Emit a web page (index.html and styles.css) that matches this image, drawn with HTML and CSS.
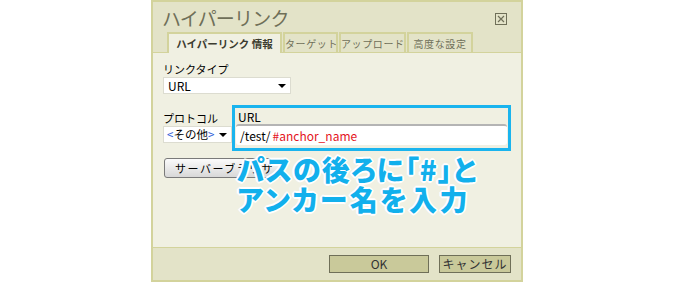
FILE: index.html
```html
<!DOCTYPE html>
<html lang="ja">
<head>
    <meta charset="UTF-8">
    <title>ハイパーリンク</title>
    <link rel="stylesheet" href="styles.css">
</head>
<body>
    <div class="dialog">
        <div class="dialog-head">
            <div class="title-row">
                <span class="title">ハイパーリンク</span>
                <svg class="close" width="12" height="12" viewBox="0 0 12 12">
                    <rect x="0.5" y="0.5" width="11" height="11" fill="none" stroke="#6f6f58"/>
                    <path d="M3 3 L9 9 M9 3 L3 9" stroke="#6f6f58" stroke-width="1.2"/>
                </svg>
            </div>
            <ul class="tabs">
                <li class="tab active">ハイパーリンク 情報</li>
                <li class="tab t-target">ターゲット</li>
                <li class="tab t-upload">アップロード</li>
                <li class="tab t-adv">高度な設定</li>
            </ul>
        </div>
        <div class="dialog-body">
            <div class="field">
                <label class="label">リンクタイプ</label>
                <div class="select select-type">URL<span class="arrow"></span></div>
            </div>
            <div class="url-row">
                <div class="field protocol">
                    <label class="label">プロトコル</label>
                    <div class="select select-proto"><span class="lt">&lt;</span>その他<span class="lt">&gt;</span><span class="arrow"></span></div>
                </div>
                <div class="url-box">
                    <div class="url-label">URL</div>
                    <div class="url-input">/test/<span class="anchor">#anchor_name</span></div>
                </div>
            </div>
            <button class="browse">サーバーブラウザ</button>
            <div class="note">パスの後ろに「#」と<br><span class="line2">アンカー名を入力</span></div>
        </div>
        <div class="dialog-foot">
            <button class="btn btn-ok">OK</button>
            <button class="btn btn-cancel">キャンセル</button>
        </div>
    </div>
</body>
</html>
```

FILE: styles.css
```css
body {
    margin: 0;
    background: #ffffff;
    font-family: "Noto Sans CJK JP", "DejaVu Sans", sans-serif;
    font-size: 11px;
    color: #000;
}

.dialog {
    margin-left: 151px;
    width: 368px;
    height: 278px;
    border: 2px solid #d3d39c;
    display: flex;
    flex-direction: column;
    background: #e3e3c8;
}

.dialog-head {
    height: 50px;
    border-bottom: 1px solid #d3d39c;
    display: flex;
    flex-direction: column;
    justify-content: space-between;
}

.title-row {
    display: flex;
    justify-content: space-between;
    align-items: center;
    padding: 2px 14px 0 9px;
    height: 27px;
}

.title {
    font-size: 19px;
    line-height: 26px;
    color: #6f6f58;
    letter-spacing: -0.8px;
}

.close {
    margin-top: 3px;
}

.tabs {
    list-style: none;
    margin: 0 0 -1px 0;
    padding: 0 0 0 14px;
    display: flex;
    height: 21px;
}

.tab {
    box-sizing: border-box;
    height: 21px;
    border: 2px solid #d3d39c;
    border-bottom: none;
    margin-right: 1px;
    color: #6f6f58;
    font-size: 10px;
    line-height: 19px;
    letter-spacing: 0.6px;
    text-align: center;
    white-space: nowrap;
    overflow: hidden;
}

.tab.active {
    width: 115px;
    background: #f0f0e2;
    color: #3c3c30;
    font-weight: bold;
    font-size: 10.5px;
    letter-spacing: 0;
}

.t-target { width: 55px; }
.t-upload { width: 67px; }
.t-adv { width: 66px; }

.dialog-body {
    position: relative;
    flex: 1;
    background: #f0f0e2;
    padding: 9px 10px 0 10px;
    border-bottom: 1px solid #d3d39c;
}

.label {
    display: block;
    height: 14px;
    line-height: 14px;
    font-size: 11px;
}

.select {
    position: relative;
    box-sizing: border-box;
    height: 17px;
    background: #fff;
    border: 1px solid #dcdcd0;
    font-size: 12px;
    line-height: 15px;
    padding-left: 4px;
    margin-top: 1px;
    white-space: nowrap;
}

.select-type {
    width: 128px;
}

.select-proto {
    width: 69px;
    padding-left: 3px;
    font-size: 11.5px;
}

.lt {
    color: #2a5bd7;
}

.arrow {
    position: absolute;
    right: 4px;
    top: 6px;
    border-left: 4px solid transparent;
    border-right: 4px solid transparent;
    border-top: 4px solid #000;
}

.url-row {
    display: flex;
    align-items: flex-start;
    margin-top: 11px;
}

.protocol {
    padding-top: 6px;
    width: 70px;
}

.url-box {
    width: 276px;
    height: 39px;
    border: 3px solid #1ab4ee;
    padding: 1px 1px 0 1px;
    box-sizing: content-box;
}

.url-label {
    height: 15px;
    line-height: 15px;
    font-size: 12px;
    padding-left: 2px;
}

.url-input {
    height: 19px;
    background: #fff;
    border-top: 2px solid #b4b4b4;
    border-radius: 3px;
    font-size: 12px;
    line-height: 19px;
    padding-left: 4px;
}

.anchor {
    color: #e4141e;
    margin-left: 2px;
}

.browse {
    display: block;
    margin: 7px 0 0 1px;
    height: 20px;
    padding: 0 10px;
    white-space: nowrap;
    font-family: "Noto Sans CJK JP", sans-serif;
    font-size: 11px;
    letter-spacing: 1.5px;
    border: 1px solid #7a7a7a;
    border-radius: 3px;
    background: linear-gradient(#fbfbfb, #d8d8d8);
}

.note {
    position: absolute;
    left: 84px;
    top: 101px;
    font-family: "Noto Sans CJK JP", sans-serif;
    font-weight: 900;
    font-size: 28px;
    line-height: 30px;
    letter-spacing: 1px;
    font-feature-settings: "palt";
    color: #12b0ec;
    text-shadow: 2px 0 0 #fff, -2px 0 0 #fff, 0 2px 0 #fff, 0 -2px 0 #fff,
        1px 1px 0 #fff, -1px -1px 0 #fff, 1px -1px 0 #fff, -1px 1px 0 #fff;
}

.line2 {
    letter-spacing: 2.3px;
}

.dialog-foot {
    height: 32px;
    display: flex;
    justify-content: flex-end;
    align-items: center;
    padding-right: 10px;
    gap: 10px;
}

.btn {
    height: 18px;
    background: #c9c99a;
    border: 1px solid #6f6f58;
    font-family: "Noto Sans CJK JP", sans-serif;
    font-size: 12px;
    line-height: 14px;
    color: #333;
    padding: 0;
}

.btn-ok { width: 100px; }
.btn-cancel { width: 72px; letter-spacing: 1px; }
```
